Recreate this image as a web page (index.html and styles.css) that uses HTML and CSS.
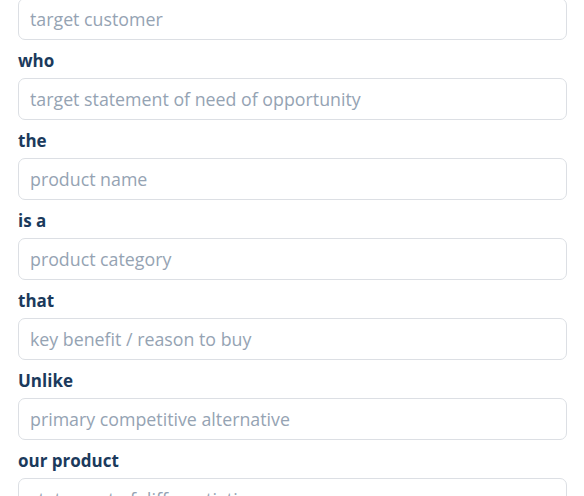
FILE: index.html
```html
<!DOCTYPE html>
<html>
<head>
<meta charset="utf-8">
<link rel="stylesheet" href="styles.css">
</head>
<body>
<form class="form">
  <input class="field" type="text" placeholder="target customer">
  <label class="label">who</label>
  <input class="field" type="text" placeholder="target statement of need of opportunity">
  <label class="label">the</label>
  <input class="field" type="text" placeholder="product name">
  <label class="label">is a</label>
  <input class="field" type="text" placeholder="product category">
  <label class="label">that</label>
  <input class="field" type="text" placeholder="key benefit / reason to buy">
  <label class="label">Unlike</label>
  <input class="field" type="text" placeholder="primary competitive alternative">
  <label class="label">our product</label>
  <input class="field" type="text" placeholder="statement of differentiation">
</form>
</body>
</html>
```
FILE: styles.css
```css
html, body {
  margin: 0;
  padding: 0;
  background: #ffffff;
  overflow: hidden;
}
.form {
  display: flex;
  flex-direction: column;
  margin: -2px 17px 0 18px;
  font-family: "Open Sans", "Noto Sans", sans-serif;
}
.field {
  box-sizing: border-box;
  height: 42px;
  width: 100%;
  border: 1px solid #dcdfe4;
  border-radius: 7px;
  padding: 0 11px;
  font-family: inherit;
  font-size: 17.8px;
  color: #1c3553;
  background: #ffffff;
  outline: none;
}
.field::placeholder {
  color: #95a3b3;
}
.label {
  display: block;
  padding-top: 9px;
  margin-bottom: 5px;
  line-height: 24px;
  font-size: 17px;
  font-weight: 700;
  color: #1b3a5c;
}
```
